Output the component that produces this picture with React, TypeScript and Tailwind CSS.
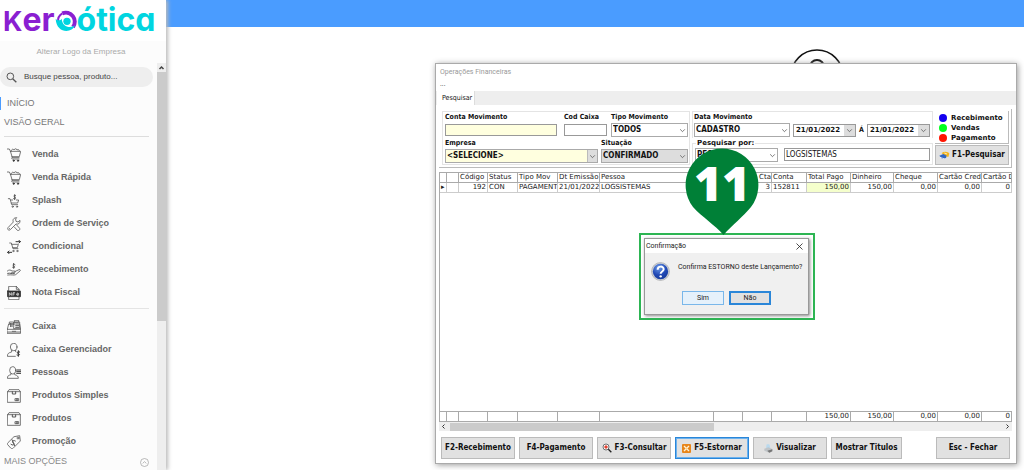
import type { ReactNode } from "react";
import clsx from "clsx";

/* ---------- Sidebar icons, all drawn on a 42 unit grid ---------- */

const Icon = ({ children }: { children: ReactNode }) => (
  <svg
    viewBox="0 0 42 42"
    className="size-[14px] shrink-0"
    fill="none"
    stroke="#555"
    strokeWidth="2.4"
    strokeLinecap="round"
    strokeLinejoin="round"
    aria-hidden="true"
  >
    {children}
  </svg>
);

const CartIcon = () => (
  <Icon>
    <path d="M1 3h6l3 6 6 20h20M10 10h31l-4 16H15" />
    <path d="M13 9c0-6 6-7 8-3 2-5 8-5 9 0 4-3 8 0 7 3" />
    <path d="M15 29c-2 2-1 4 1 4h20" />
    <circle cx="20" cy="38" r="2" fill="#333" stroke="#333" />
    <circle cx="33" cy="38" r="2" fill="#333" stroke="#333" />
  </Icon>
);

const SplashIcon = () => (
  <Icon>
    <path d="M4 14h5l5 18h18M11 18h6M28 18h7l-3 9H13" />
    <circle cx="17" cy="38" r="2" />
    <circle cx="30" cy="38" r="2" />
    <path d="M26 5c-5-3-8 2-3 4s3 7-3 5M23 2v15" strokeWidth="3" />
  </Icon>
);

const ToolsIcon = () => (
  <Icon>
    <path d="M28 2c-8 0-12 6-9 13L3 32c-3 5 2 10 7 6l17-17c8 2 13-3 12-11l-6 5-6-2-1-6z" />
    <path d="M22 30l9 10c5 2 9-2 7-6l-9-10M7 35h1" />
  </Icon>
);

const ConditionalIcon = () => (
  <Icon>
    <path d="M8 9h5l5 17h15M14 13h20l-3 10H17" />
    <circle cx="19" cy="33" r="2" />
    <circle cx="31" cy="33" r="2" />
    <path d="M27 5h13M36 1l4 4-4 4M14 37H2M6 33l-4 4 4 4" stroke="#333" strokeWidth="3" />
  </Icon>
);

const ReceiveIcon = () => (
  <Icon>
    <path d="M24 5c-5-4-9 2-4 4s4 7-3 4M20 1v15" strokeWidth="3" />
    <path d="M1 24c6-5 10-3 14 0h7c4 0 4 5 0 5h-8M23 26l13-6c4-1 6 2 3 4L26 35c-6 3-12-1-24 1" />
    <path d="M2 31c8-2 12 2 20 1" strokeWidth="3" />
  </Icon>
);

const InvoiceIcon = () => (
  <Icon>
    <path d="M5 14V1h23l8 9v5M28 1v9h8M5 33v8h31v-8" />
    <rect x="1" y="15" width="40" height="17" rx="1" fill="#333" stroke="#333" />
    <path d="M7 28v-8l6 8v-8M18 28v-8h5M18 24h4M30 25h5c0-5-6-5-6 0s5 3 6 2" stroke="#fff" strokeWidth="2" />
  </Icon>
);

const RegisterIcon = () => (
  <Icon>
    <path d="M1 28h40v12H1zM1 28l4-16h17M41 28l-3-16M16 34h10M1 36h40" />
    <path d="M7 13V6h13v8M22 6V1h13v5zM22 6h16v20H21z" />
    <path d="M11 10v10M15 10v10M26 12h9M26 17h9M26 22h9" strokeWidth="3" />
  </Icon>
);

const ManagerIcon = () => (
  <Icon>
    <ellipse cx="20" cy="12" rx="10" ry="11" />
    <path d="M14 22v5C5 29 1 32 1 40h24M26 22v4" />
    <path d="M38 27c-7-3-10 3-4 5s4 7-4 4M34 23v17" stroke="#333" strokeWidth="3" />
  </Icon>
);

const PeopleIcon = () => (
  <Icon>
    <ellipse cx="17" cy="13" rx="9" ry="11" />
    <path d="M12 23v3C4 28 1 30 1 37h33c0-6-3-9-11-11v-3" />
    <path d="M29 12h12M29 17h12M29 22h12" stroke="#333" strokeWidth="3" />
  </Icon>
);

const BoxIcon = () => (
  <Icon>
    <path d="M2 8l4-6h30l4 6v32H2zM2 8h38" />
    <path d="M16 8v7h10V8" strokeWidth="3" />
    <path d="M25 29h10v6H25zM28 29v6M32 29v6" />
  </Icon>
);

const TagIcon = () => (
  <Icon>
    <path d="M22 5l16-3 2 16-22 22c-2 2-4 2-6 0L2 29c-1-2-1-4 0-5z" />
    <circle cx="33" cy="9" r="3" />
    <path d="M25 18c-7-5-11 3-6 6s1 10-7 4M15 14l8 18" strokeWidth="3" />
  </Icon>
);

const salesItems = [
  { label: "Venda", icon: <CartIcon /> },
  { label: "Venda Rápida", icon: <CartIcon /> },
  { label: "Splash", icon: <SplashIcon /> },
  { label: "Ordem de Serviço", icon: <ToolsIcon /> },
  { label: "Condicional", icon: <ConditionalIcon /> },
  { label: "Recebimento", icon: <ReceiveIcon /> },
  { label: "Nota Fiscal", icon: <InvoiceIcon /> },
];

const registerItems = [
  { label: "Caixa", icon: <RegisterIcon /> },
  { label: "Caixa Gerenciador", icon: <ManagerIcon /> },
  { label: "Pessoas", icon: <PeopleIcon /> },
  { label: "Produtos Simples", icon: <BoxIcon /> },
  { label: "Produtos", icon: <BoxIcon /> },
  { label: "Promoção", icon: <TagIcon /> },
];

type MenuItem = { label: string; icon: ReactNode };

const MenuList = ({ items }: { items: MenuItem[] }) => (
  <ul>
    {items.map((item) => (
      <li key={item.label}>
        <a href="#" className="flex h-[23px] items-center gap-[11px] pl-[7px] text-[9px] font-bold text-[#666]">
          {item.icon}
          {item.label}
        </a>
      </li>
    ))}
  </ul>
);

const Logo = () => (
  <div className="flex h-[41px] items-baseline bg-white pl-[3px] font-['Inter'] text-[32px] leading-[40px] font-bold [font-feature-settings:'cv11']">
    <span className="text-[27px] text-[#8a1fd1]">K</span>
    <span className="text-[#8a1fd1]">er</span>
    <svg viewBox="0 0 66 66" className="size-[22px] shrink-0 translate-y-px" aria-label="o">
      <path d="M22 10A27 27 0 0 1 54 51" fill="none" stroke="#8a1fd1" strokeWidth="12" />
      <path d="M22 10C10 18 8 26 10 34" fill="none" stroke="#8a1fd1" strokeWidth="6" />
      <path d="M2 26c2 44 48 46 58 20-14 10-38 6-40-20-4 6-12 6-18 0z" fill="#00d5e0" />
      <circle cx="36" cy="34" r="11" fill="#00d5e0" />
    </svg>
    <span className="text-[#00d5e0]">ótica</span>
  </div>
);

const Sidebar = () => (
  <aside className="z-10 flex w-[166px] shrink-0 flex-col bg-[#fcfcfc] font-['Liberation_Sans',sans-serif] shadow-[2px_0_4px_#bbb]">
    <Logo />
    <a href="#" className="flex h-[22px] items-center justify-center pr-1 text-[8px] text-[#aaa]">
      Alterar Logo da Empresa
    </a>
    <div className="flex min-h-0 flex-1">
      <nav className="min-w-0 flex-1 pt-1">
        <label className="mr-1 flex h-5 items-center gap-[7px] rounded-full bg-[#eee] pl-[6px]">
          <svg viewBox="0 0 33 33" className="size-[11px] shrink-0" fill="none" stroke="#555" strokeWidth="3">
            <circle cx="13" cy="13" r="10" />
            <path d="M20 20l11 11" strokeWidth="4" />
          </svg>
          <input
            type="text"
            aria-label="Busca"
            placeholder="Busque pessoa, produto..."
            className="w-full min-w-0 bg-transparent text-[8px] outline-none placeholder:text-[#444]"
          />
        </label>
        <a href="#" className="mt-[10px] flex h-[13px] items-center border-l border-[#4a9cff] pl-[6px] text-[9px] text-[#777]">
          INÍCIO
        </a>
        <h2 className="flex h-[26px] items-center pl-1 text-[9px] text-[#777]">VISÃO GERAL</h2>
        <hr className="mr-2 ml-1 border-[#ddd]" />
        <div className="pt-[6px] pb-[4px]">
          <MenuList items={salesItems} />
        </div>
        <hr className="mr-2 ml-1 border-[#e4e4e4]" />
        <div className="pt-[6px]">
          <MenuList items={registerItems} />
        </div>
        <button type="button" className="flex h-[18px] w-full items-center justify-between pr-2 pl-1 text-[9px] text-[#888]">
          MAIS OPÇÕES
          <svg viewBox="0 0 27 27" className="size-[9px]" fill="none" stroke="#999" strokeWidth="2">
            <circle cx="13.5" cy="13.5" r="12" />
            <path d="M8 16l5.500-5 5.500 5" />
          </svg>
        </button>
      </nav>
      {/* Scrollbar */}
      <div className="flex w-[9px] flex-col bg-[#eee]">
        <svg viewBox="0 0 9 9" className="size-[9px] shrink-0" fill="none" stroke="#444" strokeWidth="1.500">
          <path d="M2.500 6l2-2 2 2" />
        </svg>
        <div className="h-[249px] bg-[#cbcbcb]" />
      </div>
    </div>
  </aside>
);

/* ---------- Form controls ---------- */

const Chevron = () => (
  <svg viewBox="0 0 9 9" className="size-[7px]" fill="none" stroke="#555" aria-hidden="true">
    <path d="M1.500 3l3 3 3-3" />
  </svg>
);

type SelectProps = { id: string; value: string; className?: string; boxed?: boolean };

const Select = ({ id, value, className, boxed }: SelectProps) => (
  <div className={clsx("relative h-[14px] border border-[#aaa]", className)}>
    <select id={id} className="block h-3 w-full appearance-none bg-transparent pl-px text-[8px] leading-3 font-bold outline-none">
      <option>{value}</option>
    </select>
    <span
      className={clsx(
        "pointer-events-none absolute inset-y-0 right-0 flex w-[10px] items-center justify-center",
        boxed && "border-l border-[#bbb] bg-[#ddd]",
      )}
    >
      <Chevron />
    </span>
  </div>
);

const DateField = ({ label }: { label: string }) => (
  <div className="flex h-[13px] min-w-0 flex-1 border border-[#999] bg-white">
    <input
      type="text"
      aria-label={label}
      defaultValue="21/01/2022"
      className="w-full min-w-0 pl-[2px] font-['DejaVu_Sans'] text-[7px] leading-[11px] font-bold outline-none"
    />
    <button type="button" aria-label="Abrir calendário" className="flex w-[11px] shrink-0 items-center justify-center bg-[#ddd]">
      <Chevron />
    </button>
  </div>
);

const FieldLabel = ({ htmlFor, children }: { htmlFor: string; children: ReactNode }) => (
  <label htmlFor={htmlFor} className="block h-[11px] text-[7px] leading-[11px] font-bold whitespace-nowrap">
    {children}
  </label>
);

const legend = [
  { label: "Recebimento", color: "bg-[#1400f0]" },
  { label: "Vendas", color: "bg-[#00ff1e]" },
  { label: "Pagamento", color: "bg-[#ff1400]" },
];

const Filters = () => (
  <div className="flex gap-[2px] border-r border-b border-[#bbb] pt-[2px] pr-[2px] pb-[2px] pl-[3px]">
    <div className="flex w-[248px] shrink-0 flex-col gap-px border border-[#e4e4e4] pb-px pl-[2px]">
      <div className="flex">
        <div className="w-[119px]">
          <FieldLabel htmlFor="conta">Conta Movimento</FieldLabel>
          <input id="conta" type="text" className="mt-px block h-3 w-28 border border-[#999] bg-[#ffffdf]" />
        </div>
        <div className="w-[47px]">
          <FieldLabel htmlFor="caixa">Cod Caixa</FieldLabel>
          <input id="caixa" type="text" className="mt-px block h-3 w-[43px] border border-[#999]" />
        </div>
        <div className="w-[77px]">
          <FieldLabel htmlFor="tipo">Tipo Movimento</FieldLabel>
          <Select id="tipo" value="TODOS" />
        </div>
      </div>
      <div className="flex gap-[3px]">
        <div className="w-[153px]">
          <FieldLabel htmlFor="empresa">Empresa</FieldLabel>
          <Select id="empresa" value="<SELECIONE>" className="bg-[#ffffdf]" boxed />
        </div>
        <div className="w-[87px]">
          <FieldLabel htmlFor="situacao">Situação</FieldLabel>
          <Select id="situacao" value="CONFIRMADO" className="bg-[#ddd]" />
        </div>
      </div>
    </div>

    <div className="min-w-0 flex-1">
      <div className="h-[27px] border border-b-0 border-[#e4e4e4] pl-px">
        <FieldLabel htmlFor="data">Data Movimento</FieldLabel>
        <div className="flex items-center gap-[3px] pr-[2px]">
          <Select id="data" value="CADASTRO" className="w-24 shrink-0" />
          <DateField label="Data inicial" />
          <span className="text-[7px] font-bold">Á</span>
          <DateField label="Data final" />
        </div>
      </div>
      <fieldset className="flex h-[27px] gap-[6px] border border-[#e4e4e4] pr-[2px] pl-[2px]">
        <legend className="ml-px h-[10px] px-px font-['DejaVu_Sans'] text-[7px] leading-[10px] font-bold">Pesquisar por:</legend>
        <Select id="campo" value="PESSOA" className="w-[83px] shrink-0" />
        <input
          type="text"
          aria-label="Pesquisar por"
          defaultValue="LOGSISTEMAS"
          className="h-[13px] min-w-0 flex-1 border border-[#999] px-px text-[8px] outline-none"
        />
      </fieldset>
    </div>

    <div className="flex w-[74px] shrink-0 flex-col justify-between">
      <ul className="border-r border-b border-[#bbb] pt-[2px]">
        {legend.map((item) => (
          <li key={item.label} className="flex h-[10px] items-center gap-1 pl-1 font-['DejaVu_Sans'] text-[7px] font-bold">
            <span className={clsx("size-2 shrink-0 rounded-full", item.color)} />
            {item.label}
          </li>
        ))}
      </ul>
      <button type="button" className="flex h-5 items-center justify-center gap-[2px] border border-[#bbb] bg-[#e1e1e1] text-[8px] font-bold whitespace-nowrap">
        <svg viewBox="0 0 33 27" className="h-[9px] w-[11px]" aria-hidden="true">
          <path d="M8 6C16 0 28 2 31 8l-3 10-12-4z" fill="#f3b61f" />
          <path d="M1 14l12-5 10 5-2 7-12 2z" fill="#2f66c4" />
          <path d="M3 19l12 4M16 6l8 3" stroke="#fff" strokeWidth="2" />
        </svg>
        F1-Pesquisar
      </button>
    </div>
  </div>
);

/* ---------- Grid of movements ---------- */

type Column = { title: string; width?: string; value: string; total?: string; right?: boolean };

const columns: Column[] = [
  { title: "", width: "w-[7px]", value: "▸" },
  { title: "", width: "w-3", value: "" },
  { title: "Código", width: "w-[29px]", value: "192", right: true },
  { title: "Status", width: "w-[30px]", value: "CON" },
  { title: "Tipo Mov", width: "w-10", value: "PAGAMENTO" },
  { title: "Dt Emissão", width: "w-[42px]", value: "21/01/2022" },
  { title: "Pessoa", width: "w-[114px]", value: "LOGSISTEMAS" },
  { title: "", width: "w-[29px]", value: "" },
  { title: "Cta", width: "w-[29px]", value: "3", right: true },
  { title: "Conta", width: "w-[35px]", value: "152811" },
  { title: "Total Pago", width: "w-11", value: "150,00", total: "150,00", right: true },
  { title: "Dinheiro", width: "w-[43px]", value: "150,00", total: "150,00", right: true },
  { title: "Cheque", width: "w-11", value: "0,00", total: "0,00", right: true },
  { title: "Cartão Cred", width: "w-11", value: "0,00", total: "0,00", right: true },
  { title: "Cartão D", value: "0", total: "0", right: true },
];

const cell = "h-[10px] overflow-hidden border-r border-b pl-px leading-[9px] whitespace-nowrap";

const MovementsTable = () => (
  <table className="h-full w-full table-fixed border-separate border-spacing-0 border-t border-l border-[#aaa] font-['DejaVu_Sans'] text-[7px] text-[#222]">
    <colgroup>
      {columns.map((c, i) => (
        <col key={i} className={c.width} />
      ))}
    </colgroup>
    <thead>
      <tr>
        {columns.map((c, i) => (
          <th key={i} className={clsx(cell, "border-[#aaa] font-normal", c.title === "Cta" ? "text-right" : "text-left")}>
            {c.title}
          </th>
        ))}
      </tr>
    </thead>
    <tbody>
      <tr>
        {columns.map((c, i) => (
          <td
            key={i}
            className={clsx(cell, "border-[#ccc]", c.right && "pr-px text-right", c.title === "Total Pago" && "bg-[#f5ffcc]")}
          >
            {c.value}
          </td>
        ))}
      </tr>
      <tr>
        <td colSpan={columns.length} />
      </tr>
    </tbody>
    <tfoot>
      <tr>
        {columns.map((c, i) => (
          <td key={i} className={clsx(cell, "border-t border-[#aaa] pr-px text-right")}>
            {c.total}
          </td>
        ))}
      </tr>
    </tfoot>
  </table>
);

const HorizontalScrollbar = () => (
  <div className="flex h-[9px] items-center bg-[#eee]">
    <svg viewBox="0 0 9 9" className="size-[9px] shrink-0" fill="none" stroke="#333">
      <path d="M5.500 2.500l-2 2 2 2" />
    </svg>
    <div className="ml-[2px] h-2 w-[264px] bg-[#cbcbcb]" />
    <svg viewBox="0 0 9 9" className="ml-auto size-[9px] shrink-0" fill="none" stroke="#333">
      <path d="M3.500 2.500l2 2-2 2" />
    </svg>
  </div>
);

const ActionButton = ({ children, className }: { children: ReactNode; className?: string }) => (
  <button
    type="button"
    className={clsx(
      "flex h-[22px] shrink-0 items-center justify-center gap-[3px] border bg-[#e1e1e1] text-[8px] font-bold whitespace-nowrap",
      className ?? "w-[74px] border-[#bbb]",
    )}
  >
    {children}
  </button>
);

const ActionBar = () => (
  <div className="flex gap-1 pt-[6px] pr-[2px] pb-1 pl-[2px]">
    <ActionButton>F2-Recebimento</ActionButton>
    <ActionButton>F4-Pagamento</ActionButton>
    <ActionButton>
      <svg viewBox="0 0 30 30" className="size-[10px]" fill="none" aria-hidden="true">
        <circle cx="12" cy="12" r="9" fill="#fff" stroke="#555" strokeWidth="2.500" />
        <path d="M12 7v10M7 12h10" stroke="#e0301e" strokeWidth="4" />
        <path d="M19 19l9 9" stroke="#222" strokeWidth="4" />
      </svg>
      F3-Consultar
    </ActionButton>
    <ActionButton className="w-[74px] border-[#2a86d8] outline outline-[#6db2ee] -outline-offset-2">
      <svg viewBox="0 0 27 27" className="size-[9px]" aria-hidden="true">
        <rect width="27" height="27" rx="3" fill="#e8861a" />
        <path d="M6 6l15 15M21 6L6 21" stroke="#fff3d8" strokeWidth="4" />
        <circle cx="13.5" cy="13.5" r="3" fill="#ffd28a" />
      </svg>
      F5-Estornar
    </ActionButton>
    <ActionButton>
      <svg viewBox="0 0 27 27" className="size-[9px]" aria-hidden="true">
        <path d="M8 1h8l3 11H6z" fill="#b9d9ee" />
        <path d="M1 14l12-4 12 5v7l-9 4L1 20z" fill="#bfc4c8" />
        <path d="M10 20l15-4v6l-9 4z" fill="#777" />
      </svg>
      Visualizar
    </ActionButton>
    <ActionButton className="w-[71px] border-[#bbb]">Mostrar Titulos</ActionButton>
    <div className="flex-1" />
    <ActionButton>Esc - Fechar</ActionButton>
  </div>
);

/* ---------- Confirmation dialog and step marker ---------- */

const ConfirmDialog = () => (
  <div className="absolute top-[169px] left-[203px] w-[176px] border-2 border-[#2db553] bg-white p-[3px] pr-1 font-['Roboto'] text-[7px] text-[#222]">
    <div role="dialog" aria-labelledby="confirm-title" className="border border-[#999] bg-[#f0f0f0] shadow-[1px_1px_3px_#888]">
      <div className="flex h-[14px] items-center justify-between bg-white pr-[5px] pl-px">
        <h3 id="confirm-title">Confirmação</h3>
        <button type="button" aria-label="Fechar">
          <svg viewBox="0 0 7 7" className="size-[7px]" stroke="#222" strokeWidth="0.800">
            <path d="M0.500 0.500l6 6M6.500 0.500l-6 6" />
          </svg>
        </button>
      </div>
      <div className="flex h-9 items-center gap-2 pl-[6px]">
        <svg viewBox="0 0 57 57" className="size-[19px] shrink-0" aria-hidden="true">
          <defs>
            <radialGradient id="help" cx="40%" cy="25%" r="80%">
              <stop offset="0" stopColor="#6c9be8" />
              <stop offset="0.600" stopColor="#2149b5" />
              <stop offset="1" stopColor="#173a9a" />
            </radialGradient>
          </defs>
          <circle cx="28.5" cy="28.5" r="27" fill="#c9ced6" stroke="#999" strokeWidth="1.500" />
          <circle cx="28.5" cy="28.5" r="23" fill="url(#help)" />
          <path d="M20 23c0-12 18-12 18-1 0 7-9 6-9 13" fill="none" stroke="#fff" strokeWidth="6" />
          <circle cx="29" cy="43" r="3.500" fill="#fff" />
        </svg>
        <p className="-mt-2 whitespace-nowrap">Confirma ESTORNO deste Lançamento?</p>
      </div>
      <div className="flex justify-center gap-[5px] pt-[2px] pr-1 pb-[9px] pl-1">
        <button type="button" className="h-[14px] w-[42px] border border-[#79b7ea] bg-[#e5f1fb]">
          Sim
        </button>
        <button type="button" className="h-[14px] w-[42px] border-2 border-[#2a86d8] bg-[#e1e1e1] leading-[10px]">
          Não
        </button>
      </div>
    </div>
  </div>
);

const StepPin = () => (
  <div className="absolute top-[84px] left-[249px] flex h-[87px] w-[74px] justify-center">
    <svg viewBox="0 0 74 87" className="absolute inset-0" aria-hidden="true">
      <path d="M37 0.500a36.500 36.500 0 0 1 29 58.500C58 69 48 76 38.500 87 30 77 17 69 8 59A36.500 36.500 0 0 1 37 0.500z" fill="#008037" />
    </svg>
    <span className="relative pt-[3px] font-['Open_Sans'] text-[48px] leading-[64px] font-extrabold text-white">11</span>
  </div>
);

const FinancialWindow = () => (
  <section className="absolute top-[63px] right-[7px] bottom-[6px] left-[269px] flex flex-col border border-[#aaa] bg-white font-['DejaVu_Sans_Condensed','DejaVu_Sans',sans-serif] text-[#111] shadow-[1px_1px_6px_#999]">
    <header className="h-[27px] pl-1 font-['Roboto'] text-[7px] text-[#999]">
      <h1 className="h-[14px] leading-[16px]">Operações Financeiras</h1>
      <p className="leading-[13px] text-[#333]">...</p>
    </header>
    <div className="flex h-[14px] bg-[#eee] pl-px">
      <button type="button" className="border-r border-[#ddd] bg-white pr-[2px] pl-[5px] text-[7px]">
        Pesquisar
      </button>
    </div>
    <div className="flex min-h-0 flex-1 flex-col pt-1 pr-1 pl-[3px]">
      <Filters />
      <div className="mt-1 min-h-0 flex-1">
        <MovementsTable />
      </div>
      <HorizontalScrollbar />
      <ActionBar />
    </div>
    <ConfirmDialog />
    <StepPin />
  </section>
);

const App = () => {
  return (
    <div className="flex h-screen overflow-hidden bg-white">
      <Sidebar />
      <main className="relative min-w-0 flex-1">
        <div className="h-[27px] bg-[#4a9cff]" />
        {/* Brand drawing, half hidden by the window */}
        <svg viewBox="0 0 54 54" className="absolute top-[49px] left-[624px] size-[54px]" fill="none" stroke="#111" strokeWidth="1.500">
          <circle cx="27" cy="27" r="26" />
          <circle cx="27" cy="18" r="7" strokeWidth="2" />
        </svg>
        <FinancialWindow />
      </main>
    </div>
  );
};

export default App;
